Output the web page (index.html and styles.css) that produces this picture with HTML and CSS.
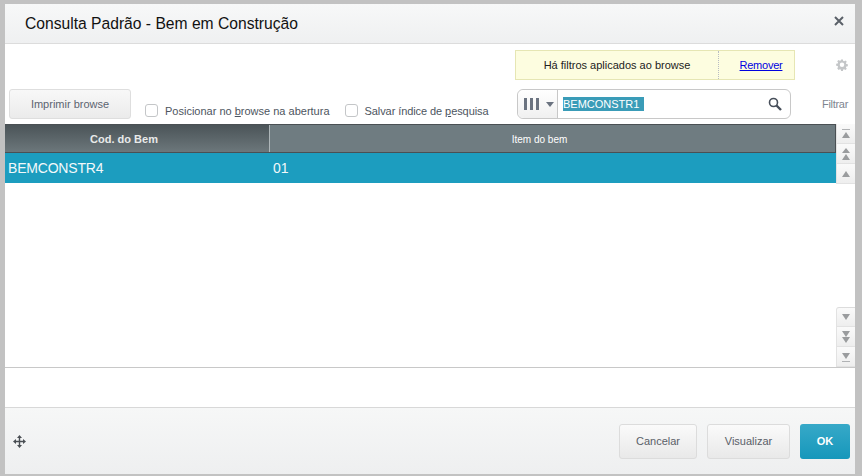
FILE: index.html
```html
<!DOCTYPE html>
<html lang="pt">
<head>
<meta charset="utf-8">
<title>Consulta Padrão</title>
<link rel="stylesheet" href="styles.css">
</head>
<body>
<div class="window">
  <header class="titlebar">
    <h1 class="title">Consulta Padrão - Bem em Construção</h1>
    <svg class="close" width="10" height="10" viewBox="0 0 10 10"><path d="M1 1L9 9M9 1L1 9" stroke="#5a6068" stroke-width="2" fill="none"/></svg>
  </header>
  <section class="toolbar">
    <div class="row-top">
      <div class="notice">
        <span class="notice-text">Há filtros aplicados ao browse</span>
        <a class="notice-link" href="#">Remover</a>
      </div>
      <svg class="gear" width="12" height="12" viewBox="-0.500 -0.500 15 15"><path d="M5.800 0h2.400l.3 1.900 1.200.5 1.600-1.100 1.700 1.700-1.100 1.600.5 1.200 1.900.3v2.400l-1.900.3-.5 1.200 1.100 1.600-1.700 1.700-1.600-1.100-1.200.5-.3 1.900H5.800l-.3-1.900-1.200-.5-1.600 1.100L1 11l1.100-1.600-.5-1.200L-.3 7.900V5.500l1.900-.3.500-1.200L1 2.400 2.700.7l1.600 1.100 1.200-.5z" fill="#c4c6c8"/><circle cx="7" cy="6.800" r="2.800" fill="#fff"/></svg>
    </div>
    <div class="row-main">
      <button class="btn-print" type="button">Imprimir browse</button>
      <label class="check check-first"><span class="box"></span><span>Posicionar no <u>b</u>rowse na abertura</span></label>
      <label class="check check-second"><span class="box"></span><span class="check-tight">Salvar índice de <u>p</u>esquisa</span></label>
      <div class="search">
        <div class="search-index">
          <svg width="15" height="12" viewBox="0 0 15 12"><path d="M0 0h3v12H0zM6 0h3v12H6zM12 0h3v12h-3z" fill="#6b7380"/></svg>
          <span class="caret"></span>
        </div>
        <div class="search-field"><span class="selected">BEMCONSTR1</span></div>
        <svg class="magnifier" width="14" height="14" viewBox="0 0 14 14"><circle cx="5.500" cy="5.500" r="4" stroke="#474f5a" stroke-width="1.600" fill="none"/><path d="M8.500 8.500L13 13" stroke="#474f5a" stroke-width="2.400"/></svg>
      </div>
      <span class="filter-label">Filtrar</span>
    </div>
  </section>
  <section class="browse">
    <div class="table">
      <div class="thead">
        <div class="th th-active">Cod. do Bem</div>
        <div class="th th-rest">Item do bem</div>
      </div>
      <div class="tr">
        <div class="td td-first">BEMCONSTR4</div>
        <div class="td">01</div>
      </div>
    </div>
    <div class="scroller">
      <div class="scroll-group">
        <div class="scroll-btn"><svg width="12" height="12" viewBox="0 0 12 12"><path d="M2 1.500h8" stroke="#b0b2b4"/><path d="M6 4l4 6H2z" fill="#9a9c9e"/></svg></div>
        <div class="scroll-btn"><svg width="12" height="14" viewBox="0 0 12 14"><path d="M6 1l4 5H2zM6 7l4 6H2z" fill="#9a9c9e"/></svg></div>
        <div class="scroll-btn"><svg width="12" height="8" viewBox="0 0 12 8"><path d="M6 1l4 6H2z" fill="#9a9c9e"/></svg></div>
      </div>
      <div class="scroll-group scroll-group-end">
        <div class="scroll-btn"><svg width="12" height="8" viewBox="0 0 12 8"><path d="M2 1h8L6 7z" fill="#9a9c9e"/></svg></div>
        <div class="scroll-btn"><svg width="12" height="14" viewBox="0 0 12 14"><path d="M2 1h8L6 7zM2 7h8l-4 6z" fill="#9a9c9e"/></svg></div>
        <div class="scroll-btn"><svg width="12" height="12" viewBox="0 0 12 12"><path d="M2 2h8L6 8z" fill="#9a9c9e"/><path d="M2 10.500h8" stroke="#b0b2b4"/></svg></div>
      </div>
    </div>
  </section>
  <div class="spacer"></div>
  <footer class="footer">
    <svg class="move" width="13" height="13" viewBox="0 0 13 13"><path d="M6.500 0L9 3H7.200v2.800H10V4l3 2.500L10 9V7.200H7.200V10H9l-2.500 3L4 10h1.800V7.200H3V9L0 6.500 3 4v1.800h2.800V3H4z" fill="#4a4f54"/></svg>
    <div class="actions">
      <button class="btn btn-cancel" type="button">Cancelar</button>
      <button class="btn btn-view" type="button">Visualizar</button>
      <button class="btn-ok" type="button">OK</button>
    </div>
  </footer>
</div>
</body>
</html>
```
FILE: styles.css
```css
html, body { margin: 0; padding: 0; }
body {
  width: 862px;
  height: 476px;
  overflow: hidden;
  background: #c2c2c2;
  font-family: "Liberation Sans", Arial, sans-serif;
  color: #4a5058;
}
.window {
  width: 850px;
  height: 470px;
  margin: 4px 7px 2px 5px;
  background: #fff;
  display: flex;
  flex-direction: column;
}
.titlebar {
  height: 39px;
  flex: none;
  display: flex;
  align-items: center;
  justify-content: space-between;
  padding: 0 11px 0 20px;
  background: linear-gradient(#f7f8f8, #eff0f1);
  border-bottom: 1px solid #dcdcdc;
}
.title { margin: 0; font-size: 15.65px; font-weight: 400; color: #111; }
.close { display: block; margin-bottom: 6px; }
.toolbar { height: 80px; flex: none; padding: 6px 0 0; box-sizing: border-box; }
.row-top { display: flex; align-items: center; height: 30px; padding-left: 510px; }
.notice {
  width: 280px;
  height: 30px;
  box-sizing: border-box;
  display: flex;
  align-items: center;
  background: #fdfde0;
  border: 1px solid #e6e6b4;
  font-size: 11px;
  color: #222;
}
.notice-text { width: 203px; text-align: center; box-sizing: border-box; line-height: 28px; border-right: 1px dotted #b8bcc4; }
.notice-link { flex: 1; text-align: center; color: #0000e0; padding-left: 9px; letter-spacing: -0.25px; }
.gear { margin-left: 41px; margin-top: -1px; }
.row-main { display: flex; align-items: flex-end; height: 30px; margin-top: 9px; padding-left: 4px; font-size: 11px; }
.btn-print {
  width: 122px;
  height: 30px;
  padding: 0;
  border: 1px solid #dedede;
  border-radius: 3px;
  background: linear-gradient(#f8f8f8, #ebebeb);
  color: #5c6470;
  font: 11px "Liberation Sans", Arial, sans-serif;
}
.check { display: flex; align-items: center; gap: 7px; height: 15px; margin-bottom: 1px; color: #4d5560; }
.check-first { margin-left: 14px; }
.check-second { margin-left: 15px; }
.check-tight { letter-spacing: -0.08px; }
.box { width: 11px; height: 11px; border: 1px solid #c4c6c8; border-radius: 3px; background: #fff; }
.search {
  width: 274px;
  height: 30px;
  box-sizing: border-box;
  margin-left: 28.5px;
  display: flex;
  align-items: center;
  border: 1px solid #c8c8c8;
  border-radius: 6px;
}
.search-index {
  width: 40px;
  height: 28px;
  flex: none;
  box-sizing: border-box;
  padding-left: 2px;
  display: flex;
  align-items: center;
  justify-content: center;
  gap: 7px;
  border-right: 1px solid #c8c8c8;
  border-radius: 6px 0 0 6px;
  background: linear-gradient(#fff, #f0f0f0);
}
.caret { width: 0; height: 0; border-left: 4px solid transparent; border-right: 4px solid transparent; border-top: 5px solid #6b7380; }
.search-field { flex: 1; padding-left: 5px; }
.selected { display: block; width: 81px; height: 14px; line-height: 14px; background: #3a9cb8; color: #fff; font-size: 11px; }
.magnifier { margin-right: 8px; }
.filter-label { margin-left: 31px; line-height: 30px; color: #7e8590; letter-spacing: -0.3px; }
.browse { height: 244px; flex: none; box-sizing: border-box; display: flex; border-bottom: 1px solid #c8c8c8; }
.table { width: 831px; flex: none; }
.thead { display: flex; height: 29px; box-sizing: border-box; border-top: 1px solid #4a5054; border-bottom: 1px solid #4a5054; border-right: 1px solid #4a5054; color: #fff; font-size: 11px; }
.th { display: flex; align-items: center; justify-content: center; box-sizing: border-box; padding-right: 26px; }
.th-active { width: 265px; flex: none; font-weight: 700; background: linear-gradient(#4b5458, #6c777b); border-right: 1px solid #aeb6b9; color: #e8eaea; }
.th-rest { flex: 1; background: #6f7c81; font-size: 10px; padding-top: 1px; }
.tr { display: flex; height: 30px; background: #1c9dbf; color: #f2f8fa; font-size: 14px; line-height: 30px; }
.td { padding-left: 3px; }
.td-first { width: 262px; flex: none; letter-spacing: -0.2px; }
.scroller { width: 19px; flex: none; display: flex; flex-direction: column; justify-content: space-between; }
.scroll-group { display: flex; flex-direction: column; }
.scroll-btn {
  height: 20px;
  box-sizing: border-box;
  display: flex;
  align-items: center;
  justify-content: center;
  background: linear-gradient(#fafafa, #eeeeee);
  border-left: 1px solid #e2e2e2;
  border-bottom: 1px solid #e2e2e2;
}
.scroll-group-end .scroll-btn:first-child { border-top: 1px solid #dcdcdc; border-top-left-radius: 3px; }
.spacer { height: 39px; flex: none; }
.footer {
  flex: 1;
  display: flex;
  align-items: center;
  justify-content: space-between;
  padding: 0 5px 0 8px;
  background: linear-gradient(#f6f7f7, #eeeff0);
  border-top: 1px solid #d8d8d8;
}
.move { display: block; }
.actions { display: flex; align-items: center; gap: 10px; }
.btn {
  height: 35px;
  padding: 0;
  border: 1px solid #dcdcdc;
  border-radius: 3px;
  background: linear-gradient(#fafafa, #e9e9e9);
  color: #5a6068;
  font: 11px "Liberation Sans", Arial, sans-serif;
}
.btn-cancel { width: 78px; }
.btn-view { width: 83px; }
.btn-ok {
  width: 50px;
  height: 35px;
  padding: 0;
  border: 0;
  border-radius: 3px;
  background: linear-gradient(#37a9c8, #1697bb);
  color: #fff;
  font: 700 11px "Liberation Sans", Arial, sans-serif;
}
```
